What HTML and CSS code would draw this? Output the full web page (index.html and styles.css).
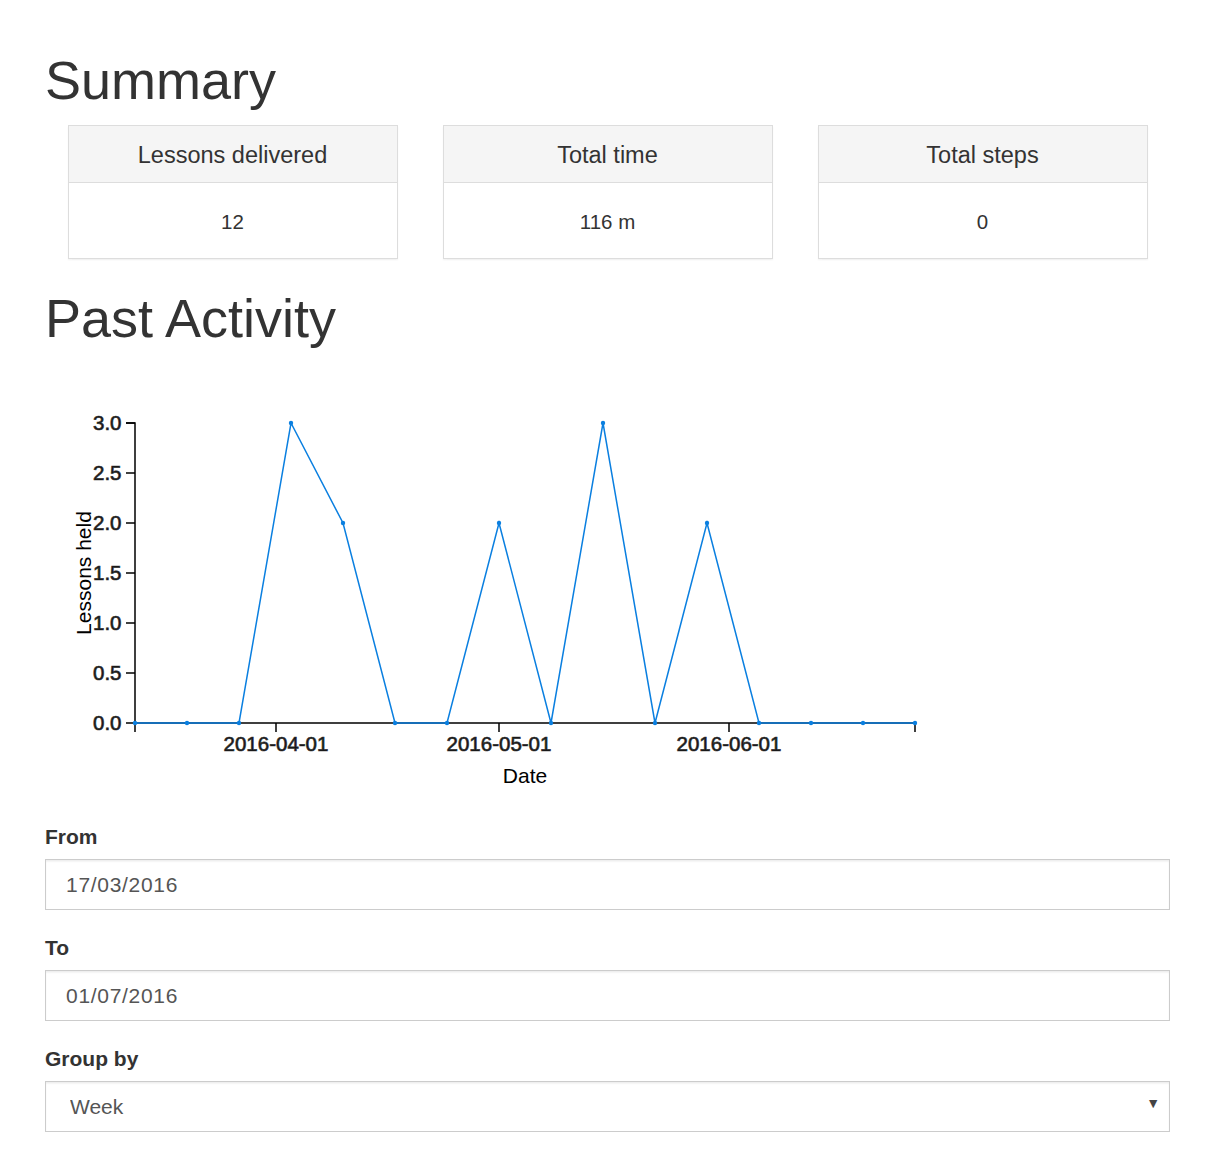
FILE: index.html
```html
<!DOCTYPE html>
<html>
<head>
<meta charset="utf-8">
<link rel="stylesheet" href="styles.css">
</head>
<body>
<div class="container">
  <h1>Summary</h1>
  <div class="row">
    <div class="col">
      <div class="panel">
        <div class="panel-heading">Lessons delivered</div>
        <div class="panel-body">12</div>
      </div>
    </div>
    <div class="col">
      <div class="panel">
        <div class="panel-heading">Total time</div>
        <div class="panel-body">116 m</div>
      </div>
    </div>
    <div class="col">
      <div class="panel">
        <div class="panel-heading">Total steps</div>
        <div class="panel-body">0</div>
      </div>
    </div>
  </div>
  <h1>Past Activity</h1>
  <svg class="chart" width="1125" height="458" viewBox="0 0 1125 458">
    <g class="axis">
      <path class="domain" d="M81,59H90V359H81"/>
      <line x1="81" y1="59" x2="90" y2="59"/>
      <line x1="81" y1="109" x2="90" y2="109"/>
      <line x1="81" y1="159" x2="90" y2="159"/>
      <line x1="81" y1="209" x2="90" y2="209"/>
      <line x1="81" y1="259" x2="90" y2="259"/>
      <line x1="81" y1="309" x2="90" y2="309"/>
      <text class="tick yt" x="76.5" y="59" dy="0.34em">3.0</text>
      <text class="tick yt" x="76.5" y="109" dy="0.34em">2.5</text>
      <text class="tick yt" x="76.5" y="159" dy="0.34em">2.0</text>
      <text class="tick yt" x="76.5" y="209" dy="0.34em">1.5</text>
      <text class="tick yt" x="76.5" y="259" dy="0.34em">1.0</text>
      <text class="tick yt" x="76.5" y="309" dy="0.34em">0.5</text>
      <text class="tick yt" x="76.5" y="359" dy="0.34em">0.0</text>
      <text class="label" transform="rotate(-90)" x="-209" y="45.5" text-anchor="middle">Lessons held</text>
    </g>
    <g class="axis">
      <path class="domain" d="M90,368V359H870V368"/>
      <line x1="231" y1="359" x2="231" y2="368"/>
      <line x1="454" y1="359" x2="454" y2="368"/>
      <line x1="684" y1="359" x2="684" y2="368"/>
      <text class="tick xt" x="231" y="386.5">2016-04-01</text>
      <text class="tick xt" x="454" y="386.5">2016-05-01</text>
      <text class="tick xt" x="684" y="386.5">2016-06-01</text>
      <text class="label" x="480" y="419" text-anchor="middle">Date</text>
    </g>
    <polyline class="line" points="90,359 142,359 194,359 246,59 298,159 350,359 402,359 454,159 506,359 558,59 610,359 662,159 714,359 766,359 818,359 870,359"/>
    <g class="dots">
      <circle cx="90" cy="359" r="2.2"/>
      <circle cx="142" cy="359" r="2.2"/>
      <circle cx="194" cy="359" r="2.2"/>
      <circle cx="246" cy="59" r="2.2"/>
      <circle cx="298" cy="159" r="2.2"/>
      <circle cx="350" cy="359" r="2.2"/>
      <circle cx="402" cy="359" r="2.2"/>
      <circle cx="454" cy="159" r="2.2"/>
      <circle cx="506" cy="359" r="2.2"/>
      <circle cx="558" cy="59" r="2.2"/>
      <circle cx="610" cy="359" r="2.2"/>
      <circle cx="662" cy="159" r="2.2"/>
      <circle cx="714" cy="359" r="2.2"/>
      <circle cx="766" cy="359" r="2.2"/>
      <circle cx="818" cy="359" r="2.2"/>
      <circle cx="870" cy="359" r="2.2"/>
    </g>
  </svg>
  <form class="form">
    <div class="form-group">
      <label>From</label>
      <input class="form-control date" type="text" value="17/03/2016">
    </div>
    <div class="form-group">
      <label>To</label>
      <input class="form-control date" type="text" value="01/07/2016">
    </div>
    <div class="form-group">
      <label>Group by</label>
      <div class="select-wrap">
        <select class="form-control select">
          <option>Week</option>
          <option>Month</option>
        </select>
        <span class="caret">▼</span>
      </div>
    </div>
  </form>
</div>
</body>
</html>
```

FILE: styles.css
```css
* { box-sizing: border-box; }
html, body {
  margin: 0;
  padding: 0;
  background: #fff;
}
body {
  font-family: "Liberation Sans", Arial, Helvetica, sans-serif;
  font-size: 21px;
  line-height: 1.42857;
  color: #333;
}
.container {
  width: 1125px;
  margin-left: 45px;
  padding-top: 21px;
}
h1 {
  font-size: 54px;
  font-weight: 500;
  line-height: 1.1;
  margin: 30px 0 15px;
  color: #333;
}
.row {
  display: flex;
}
.col {
  width: 375px;
  padding: 0 22.5px;
}
.panel {
  border: 1px solid #ddd;
  background: #fff;
  box-shadow: 0 1.5px 1.5px rgba(0,0,0,0.05);
}
.panel-heading {
  background: #f5f5f5;
  border-bottom: 1px solid #ddd;
  height: 57px;
  display: flex;
  align-items: center;
  justify-content: center;
  font-size: 23.5px;
  color: #333;
  padding-top: 3px;
}
.panel-body {
  height: 75px;
  display: flex;
  align-items: center;
  justify-content: center;
  font-size: 20.5px;
  color: #333;
  padding-top: 1px;
}
.chart {
  display: block;
  font-family: "Liberation Sans", Arial, Helvetica, sans-serif;
}
.axis path, .axis line {
  fill: none;
  stroke: #000;
  stroke-width: 1.5;
}
.tick {
  font-size: 20.5px;
  fill: #111;
  stroke: #333;
  stroke-width: 0.7;
}
.yt { text-anchor: end; }
.xt { text-anchor: middle; }
.label {
  font-size: 21px;
  fill: #000;
}
.line {
  fill: none;
  stroke: #0a7fe0;
  stroke-width: 1.5;
}
.dots circle { fill: #0a7fe0; }
.form-group {
  margin-bottom: 22.5px;
}
label {
  display: block;
  font-weight: bold;
  font-size: 21px;
  margin-bottom: 7.5px;
  line-height: 30px;
  color: #333;
}
.form-control {
  display: block;
  width: 100%;
  height: 51px;
  padding: 9px 18px;
  font-family: "Liberation Sans", Arial, Helvetica, sans-serif;
  font-size: 21px;
  color: #555;
  background: #fff;
  border: 1.5px solid #ccc;
  border-radius: 0;
  box-shadow: inset 0 1.5px 1.5px rgba(0,0,0,0.075);
  outline: none;
}
.date {
  padding-left: 20px;
  letter-spacing: 0.7px;
}
.select-wrap { position: relative; }
.select {
  -webkit-appearance: none;
  appearance: none;
  padding-left: 24px;
}
.caret {
  position: absolute;
  right: 10px;
  top: 13px;
  font-size: 14px;
  color: #444;
  pointer-events: none;
}
```
